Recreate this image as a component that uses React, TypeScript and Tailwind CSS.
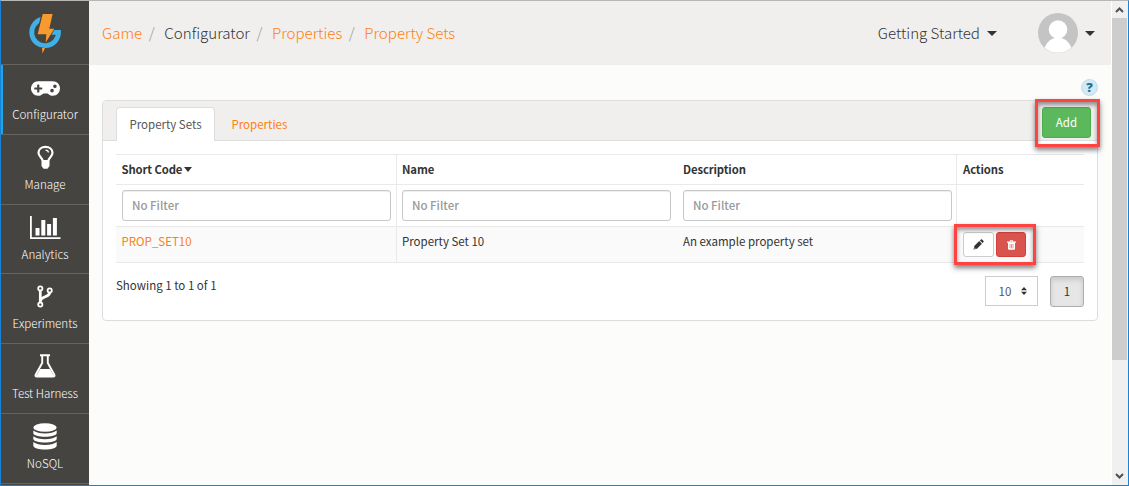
import type { ReactNode } from 'react';
import { FaGamepad } from 'react-icons/fa';

function Caret({ className = '' }: { className?: string }) {
  return (
    <svg className={className} viewBox="0 0 10 5" preserveAspectRatio="none" fill="currentColor">
      <path d="M0 0h10L5 5z" />
    </svg>
  );
}

function Logo() {
  return (
    <svg width="34" height="42" viewBox="0 0 34 42">
      <path d="M13.500 6.400A13.400 13.400 0 1 0 30.500 19.300H22" fill="none" stroke="#41b0e4" strokeWidth="4.800" />
      <path d="M13.500 0h12.400l-3.300 14.500h5.200L18.500 30h-1.800l.2-7.500H8.300z" fill="#454440" />
      <path d="M14.700 1h9.900l-3.300 14.700h5L17.700 29.500l.6-8.200H9.700z" fill="#f89a2e" />
      <path d="M14 34.900h3L14.600 40.500z" fill="#f89a2e" />
    </svg>
  );
}

const BulbIcon = () => (
  <svg className="-mt-px" width="17" height="24" viewBox="0 0 17 24" fill="none" stroke="#fff">
    <path d="M5.500 15.500C5.300 12.500 1.500 11.500 1.500 7.800 1.500 4.200 4.600 1.900 8.500 1.900s7 2.300 7 5.900c0 3.700-3.800 4.700-4 7.700" strokeWidth="2.200" />
    <path d="M8.500 5.200c1.700 0 2.800.8 2.900 2.300" strokeWidth="1.200" />
    <path d="M4.500 15h8v6l-2 2.700h-4l-2-2.700z" fill="#fff" stroke="none" />
  </svg>
);

const ChartIcon = () => (
  <svg width="31" height="23" viewBox="0 0 31 23" fill="#fff">
    <path d="M0 0h1.800v21.200H30.500V23H0z" />
    <path d="M5.500 12h4v7.500h-4zM11.300 4h4v15.500h-4zM17.100 8h4v11.500h-4zM22.900 2h4v17.500h-4z" />
  </svg>
);

const BranchIcon = () => (
  <svg width="16" height="23" viewBox="0 0 16 23" fill="none" stroke="#fff">
    <circle cx="3.300" cy="3.400" r="2.100" strokeWidth="1.800" />
    <circle cx="3.300" cy="19.600" r="2.100" strokeWidth="1.800" />
    <circle cx="12.700" cy="5.400" r="2.100" strokeWidth="1.800" />
    <path d="M3.300 5.800v11.500M12.700 7.500c0 5-8.500 3.600-9.300 8.500" strokeWidth="2.700" />
  </svg>
);

const FlaskIcon = () => (
  <svg width="22" height="24" viewBox="0 0 22 24">
    <path d="M6 1.200h10M8.200 1v8L1.800 20.500q-1 2 1 2h16.400q2 0 1-2L13.800 9V1" fill="none" stroke="#fff" strokeWidth="1.900" />
    <path d="M6.100 15h9.800l4.300 7.500H1.800z" fill="#fff" />
  </svg>
);

const DatabaseIcon = () => (
  <svg width="24" height="27" viewBox="0 0 24 27" fill="#fff">
    <ellipse cx="12" cy="4.500" rx="11.700" ry="4.300" />
    <path d="M.3 7.500q4 3 11.700 3t11.700-3v2.500c0 5-23.400 5-23.400 0z" />
    <path d="M.3 13.300q4 3 11.700 3t11.700-3v2.500c0 5-23.400 5-23.400 0z" />
    <path d="M.3 19.100q4 3 11.700 3t11.700-3v3.300c0 5.500-23.400 5.500-23.400 0z" />
  </svg>
);

function PencilIcon() {
  return (
    <svg width="11" height="11" viewBox="0 0 11 11" fill="#333">
      <path d="M.5 10.500l.8-3.500L6.200 2.100l2.700 2.700L4 9.700zM6.900 1.400L7.900.5q.6-.5 1.200 0l1.400 1.400q.5.6 0 1.200l-.9 1z" />
      <path d="M1.500 8.300l1.200 1.200-1.300.3z" fill="#fff" />
    </svg>
  );
}

function TrashIcon() {
  return (
    <svg width="9" height="10" viewBox="0 0 9 10" fill="#fff">
      <path d="M0 1.500h2.600L3.100.3h2.800l.5 1.200H9v1.200H0zM3.600 1.500h1.800L5.200 1H3.800z" fillRule="evenodd" />
      <path d="M1 2.500h7v6.300q0 1-1 1H2q-1 0-1-1z" />
      <path d="M3 4v4.300M4.500 4v4.300M6 4v4.300" stroke="#d9534f" strokeWidth=".6" />
    </svg>
  );
}

type Item = { label: string; icon: ReactNode; height: string; active?: boolean };

const items: Item[] = [
  { label: 'Configurator', icon: <FaGamepad className="mt-[3px]" size={29} />, height: 'h-[70px]', active: true },
  { label: 'Manage', icon: <BulbIcon />, height: 'h-[70px]' },
  { label: 'Analytics', icon: <ChartIcon />, height: 'h-[69px]' },
  { label: 'Experiments', icon: <BranchIcon />, height: 'h-[70px]' },
  { label: 'Test Harness', icon: <FlaskIcon />, height: 'h-[70px]' },
  { label: 'NoSQL', icon: <DatabaseIcon />, height: 'h-[70px]' },
];

function Sidebar() {
  return (
    <nav className="flex w-[88px] shrink-0 flex-col overflow-hidden bg-[#454440] text-white">
      <div className="flex h-16 shrink-0 justify-center border-b border-[#65645f] pt-[12px]">
        <Logo />
      </div>
      {items.map((it) => (
        <div
          key={it.label}
          className={`relative flex shrink-0 flex-col items-center border-b border-[#65645f] ${it.height}`}
        >
          {it.active && <span className="absolute inset-y-0 left-0 w-[2px] bg-[#1ea5e5]" />}
          <div className="mt-[8px] flex h-7 items-center justify-center">{it.icon}</div>
          <div className="mt-[3px] text-[11.600px] leading-5 font-light whitespace-nowrap">{it.label}</div>
        </div>
      ))}
    </nav>
  );
}

function Header() {
  const sep = <span className="text-[#999]">/</span>;
  return (
    <header className="flex h-16 shrink-0 items-center bg-[#f0efee] pr-[16px] pl-[13px] text-[15.100px] font-light text-[#333]">
      <div className="flex items-center gap-[6.600px] pb-[2px] whitespace-nowrap">
        <span className="text-[#ff7f0e]">Game</span>
        {sep}
        <span className="ml-[3px]">Configurator</span>
        {sep}
        <span className="ml-[3px] text-[#ff7f0e]">Properties</span>
        {sep}
        <span className="ml-[3px] text-[#ff7f0e]">Property Sets</span>
      </div>
      <div className="ml-auto flex items-center">
        <span className="pb-[2px] whitespace-nowrap">Getting Started</span>
        <Caret className="ml-[7px] h-[5px] w-[10px]" />
        <svg className="ml-[41px] h-10 w-10" viewBox="0 0 40 40">
          <circle cx="20" cy="20" r="20" fill="#c4c4c4" />
          <circle cx="20" cy="16.500" r="9.300" fill="#fff" />
          <path d="M6.500 34.500Q11 24.500 20 24.500t13.500 10A20 20 0 0 1 6.500 34.500" fill="#fff" />
        </svg>
        <Caret className="ml-[7px] h-[5px] w-[10px]" />
      </div>
    </header>
  );
}

function Filter() {
  return (
    <div className="flex h-[31px] w-[269px] items-center rounded-[3px] border border-[#c8c8c8] bg-white pl-[9px] font-medium text-[#999] shadow-[inset_0_1px_1px_rgba(0,0,0,0.075)]">
      No Filter
    </div>
  );
}

const cols = 'grid grid-cols-[281px_281px_279px_127px]';

function Table() {
  return (
    <div className="mx-[13px] mt-[13px] border-t border-[#e9e9e9]">
      <div className={`${cols} h-[30px] border-b border-[#e9e9e9] text-[11.300px] font-bold tracking-[-0.01em] leading-[29px]`}>
        <div className="flex items-center border-r border-[#e9e9e9] pl-[5.500px]">
          Short Code
          <Caret className="ml-[2px] h-[5px] w-[8px]" />
        </div>
        <div className="pl-[5px]">Name</div>
        <div className="border-r border-[#e9e9e9] pl-[5px]">Description</div>
        <div className="pl-[6px]">Actions</div>
      </div>
      <div className={`${cols} h-[42px] border-b border-[#e9e9e9]`}>
        <div className="border-r border-[#e9e9e9] pt-[5px] pl-[6px]"><Filter /></div>
        <div className="pt-[5px] pl-[5px]"><Filter /></div>
        <div className="border-r border-[#e9e9e9] pt-[5px] pl-[5px]"><Filter /></div>
        <div />
      </div>
      <div className={`${cols} h-[36px] border-b border-[#e9e9e9] bg-[#fafafa] leading-[28px]`}>
        <div className="border-r border-[#e9e9e9] pl-[5.500px] text-[#ff7f0e]">PROP_SET10</div>
        <div className="pl-[5px]">Property Set 10</div>
        <div className="border-r border-[#e9e9e9] pl-[5px]">An example property set</div>
        <div className="relative flex gap-[2px] pt-[5px] pl-[6px]">
          <button className="flex h-[25px] w-[31px] items-center justify-center rounded-[3px] border border-[#ccc] bg-white">
            <PencilIcon />
          </button>
          <button className="flex h-[25px] w-[30px] items-center justify-center rounded-[3px] border border-[#d43f3a] bg-[#d9534f] text-white">
            <TrashIcon />
          </button>
          <span className="pointer-events-none absolute top-[-3px] left-[-3px] h-[41px] w-[82px] border-3 border-[#ff4340] shadow-[0_3px_5px_rgba(0,0,0,0.5),inset_0_3px_4px_rgba(0,0,0,0.4)]" />
        </div>
      </div>
    </div>
  );
}

function Panel() {
  return (
    <section className="flex h-[221px] w-[996px] flex-col rounded-[4px] border border-[#ddd] bg-white text-[11.500px] text-[#333]">
      <div className="relative flex h-[40px] shrink-0 items-end border-b border-[#ddd] bg-[#f0efee] pl-[13px]">
        <div className="-mb-px flex h-[34px] w-[99px] items-center justify-center rounded-t-[4px] border border-b-0 border-[#ddd] bg-white pt-px text-[#555]">
          Property Sets
        </div>
        <div className="flex h-[33px] items-center pt-[2px] pl-[16.500px] text-[#ff7f0e]">Properties</div>
        <button className="mr-[6px] mb-[2px] ml-auto h-[31px] w-[49px] rounded-[3px] border border-[#4cae4c] bg-[#5cb85c] pt-px text-white">
          Add
        </button>
        <span className="pointer-events-none absolute top-[-2px] right-[-3px] h-[48px] w-[65px] border-3 border-[#ff4340] shadow-[0_3px_5px_rgba(0,0,0,0.5),inset_0_3px_4px_rgba(0,0,0,0.4)]" />
      </div>
      <Table />
      <div className="flex px-[13px] pt-[13px]">
        <span className="leading-[19px]">Showing 1 to 1 of 1</span>
        <div className="ml-auto flex h-[30px] w-[53px] items-center border border-[#ccc] pl-[12.500px] text-[#555]">
          <span className="pt-[2px]">10</span>
          <svg className="ml-[10px]" width="6" height="8" viewBox="0 0 6 8" fill="#333">
            <path d="M0 3.200L3 0l3 3.200zM0 4.800h6L3 8z" />
          </svg>
        </div>
        <button className="ml-[12px] h-[31px] w-[34px] rounded-[3px] border border-[#adadad] bg-[#e6e6e6] pt-px shadow-[inset_0_3px_5px_rgba(0,0,0,0.125)]">
          1
        </button>
      </div>
    </section>
  );
}

function Scrollbar() {
  return (
    <div className="flex w-[17px] shrink-0 flex-col items-center border-l border-white bg-[#f0f0f0]">
      <svg className="h-[17px] w-4" viewBox="0 0 16 17" fill="none" stroke="#505050" strokeWidth="2">
        <path d="M4 11l3.500-3.500L11 11" />
      </svg>
      <div className="mr-px h-[342px] w-[15px] bg-[#cdcdcd]" />
      <svg className="mt-auto h-[17px] w-4" viewBox="0 0 16 17" fill="none" stroke="#505050" strokeWidth="2">
        <path d="M4 6l3.500 3.500L11 6" />
      </svg>
    </div>
  );
}

export default function App() {
  return (
    <div className="flex h-[486px] w-[1129px] overflow-hidden border border-[#1883d7] border-t-[#b9b7b6] bg-[#fcfcfa] font-['Noto_Sans_CJK_SC',sans-serif]">
      <Sidebar />
      <div className="flex w-[1022px] shrink-0 flex-col">
        <Header />
        <div className="flex h-[35px] shrink-0 justify-end pt-[14px] pr-[13px]">
          <span className="flex h-[17px] w-[17px] items-center justify-center rounded-full border border-[#bce0ee] bg-[#d3eaf5] font-['Open_Sans',sans-serif] text-[13px] leading-none font-extrabold text-[#2d6f94]">
            ?
          </span>
        </div>
        <div className="pl-[13px]">
          <Panel />
        </div>
      </div>
      <Scrollbar />
    </div>
  );
}
